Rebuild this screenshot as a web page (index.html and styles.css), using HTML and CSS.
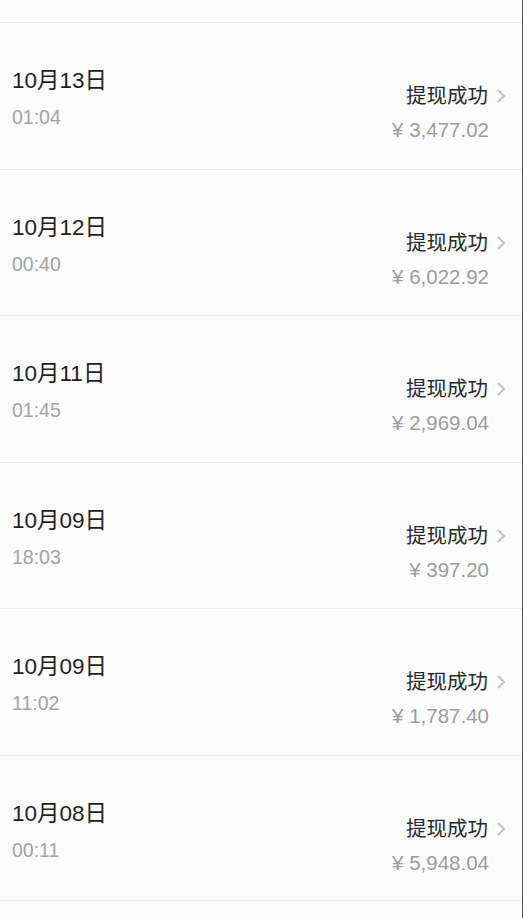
FILE: index.html
```html
<!DOCTYPE html>
<html lang="zh-CN">
<head>
<meta charset="utf-8">
<link rel="stylesheet" href="styles.css">
</head>
<body>
<div class="page">
  <ul class="list">
    <li class="row">
      <div class="left"><div class="date">10月13日</div><div class="time">01:04</div></div>
      <div class="right"><div class="status">提现成功<svg class="chev" viewBox="0 0 10 16"><polyline points="2,2 8,8 2,14"/></svg></div><div class="amount">¥ 3,477.02</div></div>
    </li>
    <li class="row">
      <div class="left"><div class="date">10月12日</div><div class="time">00:40</div></div>
      <div class="right"><div class="status">提现成功<svg class="chev" viewBox="0 0 10 16"><polyline points="2,2 8,8 2,14"/></svg></div><div class="amount">¥ 6,022.92</div></div>
    </li>
    <li class="row">
      <div class="left"><div class="date">10月11日</div><div class="time">01:45</div></div>
      <div class="right"><div class="status">提现成功<svg class="chev" viewBox="0 0 10 16"><polyline points="2,2 8,8 2,14"/></svg></div><div class="amount">¥ 2,969.04</div></div>
    </li>
    <li class="row">
      <div class="left"><div class="date">10月09日</div><div class="time">18:03</div></div>
      <div class="right"><div class="status">提现成功<svg class="chev" viewBox="0 0 10 16"><polyline points="2,2 8,8 2,14"/></svg></div><div class="amount">¥ 397.20</div></div>
    </li>
    <li class="row">
      <div class="left"><div class="date">10月09日</div><div class="time">11:02</div></div>
      <div class="right"><div class="status">提现成功<svg class="chev" viewBox="0 0 10 16"><polyline points="2,2 8,8 2,14"/></svg></div><div class="amount">¥ 1,787.40</div></div>
    </li>
    <li class="row">
      <div class="left"><div class="date">10月08日</div><div class="time">00:11</div></div>
      <div class="right"><div class="status">提现成功<svg class="chev" viewBox="0 0 10 16"><polyline points="2,2 8,8 2,14"/></svg></div><div class="amount">¥ 5,948.04</div></div>
    </li>
  </ul>
</div>
</body>
</html>
```
FILE: styles.css
```css
html, body {
  margin: 0;
  padding: 0;
  background: #fcfcfc;
}
body {
  font-family: "Liberation Sans", "Noto Sans CJK SC", sans-serif;
}
.page {
  width: 522px;
  height: 918px;
  border-right: 1px solid #5a5a5a;
  background: #fcfcfc;
  overflow: hidden;
}
.list {
  list-style: none;
  margin: 0;
  padding: 22px 0 0 0;
}
.row {
  box-sizing: border-box;
  height: 146.5px;
  border-top: 1px solid #ececec;
  display: flex;
  justify-content: space-between;
  padding: 0 16px 0 12px;
}
.row:last-child {
  border-bottom: 1px solid #ececec;
}
.left {
  padding-top: 45px;
  display: flex;
  flex-direction: column;
  gap: 12px;
}
.date {
  font-size: 22.5px;
  line-height: 26px;
  color: #1f1f1f;
}
.time {
  font-size: 19.5px;
  line-height: 22px;
  color: #a3a3a3;
}
.right {
  padding-top: 60px;
  display: flex;
  flex-direction: column;
  align-items: flex-end;
  gap: 10px;
}
.status {
  font-size: 20.5px;
  line-height: 26px;
  color: #2a2a2a;
  display: flex;
  align-items: center;
}
.chev {
  width: 10px;
  height: 16px;
  margin-left: 8px;
  fill: none;
  stroke: #c2c2c2;
  stroke-width: 2;
}
.amount {
  font-size: 20.5px;
  line-height: 22px;
  color: #9c9c9c;
  margin-right: 17px;
}
```
